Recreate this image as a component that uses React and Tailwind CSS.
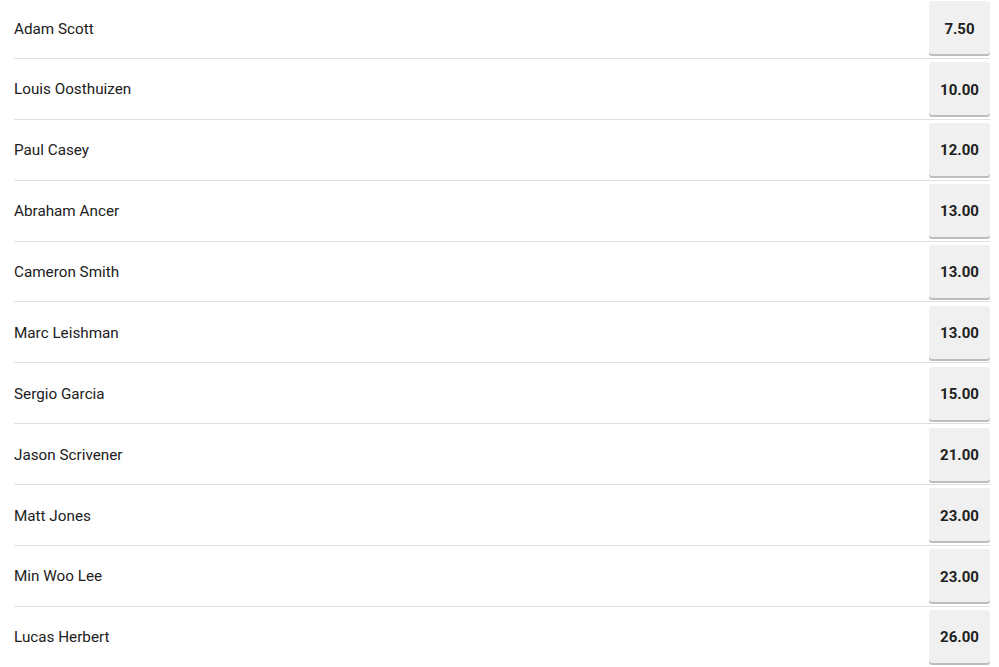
const rows = [
  ["Adam Scott", "7.50"],
  ["Louis Oosthuizen", "10.00"],
  ["Paul Casey", "12.00"],
  ["Abraham Ancer", "13.00"],
  ["Cameron Smith", "13.00"],
  ["Marc Leishman", "13.00"],
  ["Sergio Garcia", "15.00"],
  ["Jason Scrivener", "21.00"],
  ["Matt Jones", "23.00"],
  ["Min Woo Lee", "23.00"],
  ["Lucas Herbert", "26.00"],
];

export default function App() {
  return (
    <div className="w-[999px] h-[667px] overflow-hidden bg-white" style={{ fontFamily: "Roboto, sans-serif" }}>
      <div className="-mt-[2px] pl-[14px] pr-[9px]">
        {rows.map(([name, odds], i) => (
          <div key={i} className="flex items-center justify-between h-[60.89px] border-b border-[#e0e0e0]">
            <span className="pt-[2px] text-[15.25px] text-[#212121]">{name}</span>
            <button className="w-[61px] h-[53px] pt-[2px] rounded-[3px] bg-[#f0f0f0] shadow-[0_2px_0_#bdbdbd] text-[15px] font-bold text-[#212121] flex items-center justify-center">
              {odds}
            </button>
          </div>
        ))}
      </div>
    </div>
  );
}
